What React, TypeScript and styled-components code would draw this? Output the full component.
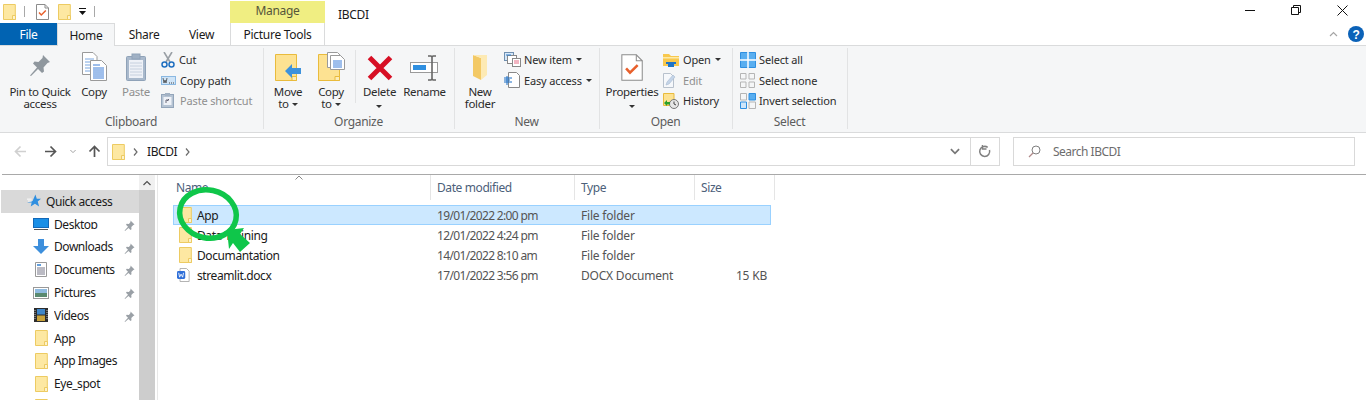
import React from "react";
import styled, { createGlobalStyle } from "styled-components";

const Global = createGlobalStyle`
  html, body { margin: 0; padding: 0; background: #fff; }
  body { font-family: "Noto Sans", "Open Sans", sans-serif; font-size: 12px; color: #1a1a1a; }
`;

const Window = styled.div`
  position: relative;
  width: 1366px;
  height: 400px;
  overflow: hidden;
  background: #fff;
  letter-spacing: -0.3px;
`;

/* ---------- title bar ---------- */
const TitleBar = styled.div`
  display: flex;
  height: 23px;
  align-items: center;
`;
const QuickBar = styled.div`
  display: flex;
  align-items: center;
  width: 230px;
  padding-left: 3px;
  box-sizing: border-box;
  & > svg { flex: none; }
`;
const QuickSep = styled.span<{ $l: number; $r: number }>`
  width: 1px;
  height: 11px;
  background: #a8a8a8;
  margin-left: ${(p) => p.$l}px;
  margin-right: ${(p) => p.$r}px;
`;
const Manage = styled.div`
  width: 95px;
  height: 22px;
  margin-top: 1px;
  background: #f0ee82;
  color: #55553a;
  display: flex;
  align-items: center;
  justify-content: center;
  padding-bottom: 4px;
  box-sizing: border-box;
`;
const WindowTitle = styled.div`
  margin-left: 13px;
  flex: 1;
  padding-top: 5px;
`;
const WinButtons = styled.div`
  display: flex;
  align-items: center;
  height: 20px;
  padding-right: 1px;
  padding-bottom: 3px;
`;
const WinBtn = styled.div`
  width: 46px;
  display: flex;
  justify-content: center;
`;

/* ---------- tabs ---------- */
const TabBar = styled.div`
  display: flex;
  height: 23px;
  box-sizing: border-box;
  border-bottom: 1px solid #dadbdc;
  align-items: stretch;
`;
const FileTab = styled.div`
  width: 57px;
  height: 22px;
  background: #0163b2;
  color: #fff;
  display: flex;
  align-items: center;
  justify-content: center;
`;
const Tab = styled.div<{ $w: number; $active?: boolean; $framed?: boolean }>`
  width: ${(p) => p.$w}px;
  height: ${(p) => (p.$active ? 23 : 22)}px;
  box-sizing: border-box;
  display: flex;
  align-items: center;
  justify-content: center;
  background: ${(p) => (p.$active ? "#f5f6f7" : "transparent")};
  border-left: ${(p) => (p.$active || p.$framed ? "1px solid #dadbdc" : "none")};
  border-right: ${(p) => (p.$active || p.$framed ? "1px solid #dadbdc" : "none")};
  border-top: ${(p) => (p.$active ? "1px solid #dadbdc" : "none")};
`;
const TabSpacer = styled.div`
  flex: 1;
  display: flex;
  justify-content: flex-end;
  align-items: center;
  gap: 10px;
  padding-right: 2px;
`;

/* ---------- ribbon ---------- */
const Ribbon = styled.div`
  display: flex;
  height: 87px;
  box-sizing: border-box;
  background: #f5f6f7;
  border-bottom: 1px solid #dadbdc;
`;
const Group = styled.div<{ $w: number }>`
  width: ${(p) => p.$w}px;
  flex: none;
  display: flex;
  flex-direction: column;
  position: relative;
  &::after {
    content: "";
    position: absolute;
    right: 0;
    top: 2px;
    bottom: 3px;
    width: 1px;
    background: #e2e3e4;
  }
`;
const GroupBody = styled.div<{ $pl: number }>`
  height: 67px;
  box-sizing: border-box;
  flex: none;
  display: flex;
  align-items: flex-start;
  padding-left: ${(p) => p.$pl}px;
  padding-top: 3px;
`;
const GroupLabel = styled.div`
  height: 19px;
  text-align: center;
  color: #5c5c5c;
  line-height: 18px;
  padding-right: 2px;
`;
const Large = styled.div<{ $w: number; $dim?: boolean }>`
  width: ${(p) => p.$w}px;
  flex: none;
  display: flex;
  flex-direction: column;
  align-items: center;
  color: ${(p) => (p.$dim ? "#8f8f8f" : "#2b2b2b")};
`;
const LargeIcon = styled.div<{ $pb?: number }>`
  height: 32px;
  box-sizing: border-box;
  padding-bottom: ${(p) => p.$pb ?? 0}px;
  display: flex;
  align-items: flex-end;
  justify-content: center;
  margin-bottom: 5px;
`;
const LargeText = styled.div`
  text-align: center;
  line-height: 12px;
  font-size: 11.5px;
  white-space: nowrap;
`;
const Caret = styled.i`
  display: inline-block;
  width: 0;
  height: 0;
  border-left: 3px solid transparent;
  border-right: 3px solid transparent;
  border-top: 3px solid #333;
  margin-left: 3px;
  vertical-align: 2px;
`;
const LoneCaret = styled(Caret)`
  margin-left: 0;
  vertical-align: 0;
`;
const VSep = styled.span`
  flex: none;
  width: 1px;
  height: 53px;
  margin: 1px 0 0 0;
  background: #e2e3e4;
`;
const SmallCol = styled.div<{ $ml: number }>`
  display: flex;
  flex-direction: column;
  margin-left: ${(p) => p.$ml}px;
  margin-top: 0.5px;
`;
const SmallRow = styled.div<{ $dim?: boolean; $tw: number }>`
  display: flex;
  align-items: center;
  height: 20.5px;
  font-size: 11px;
  letter-spacing: -0.15px;
  white-space: nowrap;
  color: ${(p) => (p.$dim ? "#8f8f8f" : "#2b2b2b")};
  & > svg {
    flex: none;
    margin-right: ${(p) => p.$tw}px;
  }
  & > i {
    margin-left: 4px;
    vertical-align: 0;
  }
`;

/* ---------- address bar ---------- */
const AddressRow = styled.div`
  height: 42px;
  display: flex;
  align-items: flex-start;
  padding-top: 4px;
  box-sizing: border-box;
  border-bottom: 1px solid #a9a9a9;
  margin-left: 2px;
`;
const NavIcons = styled.div`
  width: 105px;
  height: 29px;
  flex: none;
  display: flex;
  align-items: center;
  padding-left: 12px;
  box-sizing: border-box;
`;
const NavGap = styled.span<{ $w: number }>`
  width: ${(p) => p.$w}px;
  flex: none;
`;
const AddressBox = styled.div`
  width: 893px;
  height: 29px;
  box-sizing: border-box;
  flex: none;
  border: 1px solid #d9d9d9;
  display: flex;
  align-items: center;
  padding-left: 4px;
  letter-spacing: -0.4px;
`;
const Crumb = styled.span`
  margin: 0 9px 0 8px;
  line-height: 0;
`;
const AddressEnd = styled.div`
  margin-left: auto;
  display: flex;
  align-items: center;
  height: 100%;
`;
const Refresh = styled.div`
  width: 28px;
  height: 100%;
  border-left: 1px solid #d9d9d9;
  margin-left: 10px;
  display: flex;
  align-items: center;
  justify-content: center;
`;
const SearchBox = styled.div`
  width: 342px;
  height: 29px;
  margin-left: 13px;
  flex: none;
  box-sizing: border-box;
  border: 1px solid #d9d9d9;
  display: flex;
  align-items: center;
  padding-left: 14px;
  color: #6d6d6d;
  gap: 12px;
  letter-spacing: -0.5px;
`;

/* ---------- body ---------- */
const Body = styled.div`
  display: flex;
  height: 225px;
`;
const Sidebar = styled.div`
  width: 139px;
  flex: none;
  padding-top: 15px;
  box-sizing: border-box;
  overflow: hidden;
  letter-spacing: -0.45px;
`;
const NavRow = styled.div<{ $active?: boolean; $ml: number }>`
  height: 22.8px;
  margin-left: 1px;
  display: flex;
  align-items: center;
  position: relative;
  background: ${(p) => (p.$active ? "#d9d9d9" : "transparent")};
  padding-left: ${(p) => p.$ml}px;
`;
const NavSlot = styled.span<{ $w: number }>`
  width: ${(p) => p.$w}px;
  flex: none;
  display: flex;
  justify-content: center;
  margin-right: 5px;
`;
const NavText = styled.span<{ $clip?: boolean }>`
  color: #1a1a1a;
  white-space: nowrap;
  ${(p) => (p.$clip ? "height: 13px; line-height: 17px; overflow: hidden; margin-top: -3px;" : "")}
`;
const PinSlot = styled.span`
  position: absolute;
  left: 123px;
  top: 6px;
`;
const Scrollbar = styled.div`
  width: 16px;
  flex: none;
  background: #cdcdcd;
  display: flex;
  flex-direction: column;
`;
const ScrollUp = styled.div`
  height: 15px;
  background: #f0f0f0;
  display: flex;
  align-items: center;
  justify-content: center;
`;
const ListPane = styled.div`
  flex: 1;
  margin-left: 2px;
  border-left: 1px solid #e8e8e8;
  position: relative;
  padding-left: 12px;
`;
const SortMark = styled.span`
  position: absolute;
  left: 137px;
  top: 0;
  line-height: 0;
`;
const HeaderRow = styled.div`
  display: grid;
  grid-template-columns: 261px 144px 120px 80px;
  height: 25px;
  margin-bottom: 5px;
  letter-spacing: -0.4px;
`;
const HeadCell = styled.div`
  color: #4c607a;
  padding-left: 6px;
  border-right: 1px solid #e5e5e5;
  display: flex;
  align-items: center;
  height: 25px;
  box-sizing: border-box;
`;
const FileRow = styled.div<{ $sel?: boolean }>`
  display: grid;
  grid-template-columns: 258px 144px 120px 72px;
  height: 20px;
  width: 598px;
  margin-left: 3px;
  box-sizing: border-box;
  align-items: center;
  background: ${(p) => (p.$sel ? "#cce8ff" : "transparent")};
  outline: ${(p) => (p.$sel ? "1px solid #99d1ff" : "none")};
  outline-offset: -1px;
`;
const NameCell = styled.div`
  display: flex;
  align-items: center;
  padding-left: 6px;
  letter-spacing: -0.4px;
`;
const NameSlot = styled.span<{ $shift?: number }>`
  width: 13px;
  flex: none;
  margin-right: 5px;
  display: flex;
  margin-left: ${(p) => p.$shift ?? 0}px;
  padding-right: ${(p) => -(p.$shift ?? 0)}px;
`;
const MetaCell = styled.div<{ $right?: boolean; $tight?: boolean }>`
  color: #545454;
  padding-left: ${(p) => (p.$right ? 0 : 6)}px;
  text-align: ${(p) => (p.$right ? "right" : "left")};
  white-space: nowrap;
  letter-spacing: ${(p) => (p.$tight ? "-0.65px" : "-0.2px")};
`;
const Annotation = styled.svg`
  position: absolute;
  left: 0;
  top: 0;
  pointer-events: none;
`;

/* ---------- icons ---------- */
const Folder = () => (
  <svg width={13} height={16} viewBox="0 0 13 16">
    <path d="M.5.5h11.800v15H.5z" fill="#fde8a2" stroke="#edcb62" />
    <path d="M9.500 15.500v-4h3v4z" fill="#fdf2cc" stroke="#edcb62" />
  </svg>
);
const PropsIcon = ({ s = 1 }: { s?: number }) => (
  <svg width={13 * s} height={16 * s} viewBox="0 0 13 16">
    <path d="M.5.5h8.500l3.500 3.500v11.500H.5z" fill="#fff" stroke="#8c8c8c" strokeWidth={s > 1 ? 0.6 : 1} />
    <path d="M9 .5V4h3.500" fill="none" stroke="#8c8c8c" strokeWidth={s > 1 ? 0.6 : 1} />
    <path d="M3 8.500l2.300 2.500 4.500-4.500" fill="none" stroke="#e8602c" strokeWidth="1.500" />
  </svg>
);
const Pin = () => (
  <svg width="11" height="12" viewBox="0 0 11 12">
    <path d="M6.500.5l4 4-1.200.6-2 2 .2 2.200-1 .7-2-2L1 11l-.4-.4L4 6.800l-2-2 .7-1 2.200.2 1.600-2z" fill="#9aa0a6" />
  </svg>
);
const BigPin = () => (
  <svg width="22" height="24" viewBox="0 0 22 24">
    <path d="M14 1l7 7-2.500 1-4 4.500.5 4-2 1.500-4-4-7 7-1-.5 7-8-4-4 1.500-2 4 .5 4-4z" fill="#8f979e" />
  </svg>
);
const CopyIcon = () => (
  <svg width="25" height="29" viewBox="0 0 25 29">
    <path d="M.5.5H11l4 4v18H.5z" fill="#fff" stroke="#9a9a9a" />
    <path d="M3 7h9M3 10h9M3 13h9M3 16h9M3 19h9" stroke="#7aa7e0" />
    <path d="M8.500 8.500h11l5 5v15h-16z" fill="#fff" stroke="#9a9a9a" />
    <path d="M11 13h7M11 16h11M11 18h11M11 20h11M11 22h11M11 24h11M11 26h11" stroke="#3f7fd8" />
  </svg>
);
const PasteIcon = () => (
  <svg width="20" height="28" viewBox="0 0 20 28">
    <rect x=".5" y="3.500" width="19" height="24" rx="1" fill="#a9b9cc" stroke="#8fa2b8" />
    <rect x="3" y="7" width="14" height="18" fill="#eef1f7" />
    <path d="M4 10h12M4 13h12M4 16h12M4 19h12M4 22h12" stroke="#c6d0de" />
    <rect x="6" y="1" width="8" height="5" fill="#9fb0c4" stroke="#8fa2b8" />
  </svg>
);
const Scissors = () => (
  <svg width="14" height="16" viewBox="0 0 14 16">
    <path d="M3 0l6 10M11 0L5 10" stroke="#9aa0a6" strokeWidth="1.600" fill="none" />
    <circle cx="3.500" cy="12.500" r="2.500" fill="none" stroke="#1f6fc0" strokeWidth="1.500" />
    <circle cx="10.500" cy="12.500" r="2.500" fill="none" stroke="#1f6fc0" strokeWidth="1.500" />
  </svg>
);
const CopyPathIcon = () => (
  <svg width="15" height="9" viewBox="0 0 15 9">
    <rect x=".5" y=".5" width="14" height="8" fill="#cfe4f7" stroke="#8ab8e2" />
    <path d="M2 2l1 5 1-3 1 3 1-5" fill="none" stroke="#444" strokeWidth=".8" />
    <path d="M8 7h1M10 7h1M12 7h1" stroke="#444" />
  </svg>
);
const PasteShortcutIcon = () => (
  <svg width="13" height="15" viewBox="0 0 13 15">
    <rect x=".5" y="1.500" width="12" height="13" fill="#b5c3d3" stroke="#93a5ba" />
    <rect x="2.500" y="4" width="8" height="8" fill="#eef1f7" />
    <path d="M5 10V7h3M6 8l2-2" stroke="#667" fill="none" />
    <rect x="4" y="0" width="5" height="3" fill="#a3b2c4" />
  </svg>
);
const MoveIcon = () => (
  <svg width="27" height="27" viewBox="0 0 27 27">
    <path d="M.5.5h21v26H.5z" fill="#fde292" stroke="#e9bb3c" />
    <path d="M17 22.500h4.500v4H17z" fill="#fdedb8" stroke="#e9bb3c" />
    <path d="M10 17l7-7v4h9v6h-9v4z" fill="#3d92dc" />
  </svg>
);
const CopyToIcon = () => (
  <svg width="27" height="29" viewBox="0 0 27 29">
    <path d="M.5 2.500h21v26H.5z" fill="#fde292" stroke="#e9bb3c" />
    <path d="M17 24.500h4.500v4H17z" fill="#fdedb8" stroke="#e9bb3c" />
    <path d="M9.500.5h10l3 3v12h-13z" fill="#fff" stroke="#9a9a9a" />
    <path d="M12.500 3.500h10l4 4v10h-14z" fill="#fff" stroke="#9a9a9a" />
    <path d="M15 9h9M15 11h9M15 13h9M15 15h9" stroke="#3f7fd8" />
  </svg>
);
const DeleteIcon = () => (
  <svg width="26" height="26" viewBox="0 0 26 26">
    <path d="M2.500 2.500l21 21M23.500 2.500l-21 21" stroke="#d70f24" strokeWidth="5" fill="none" />
  </svg>
);
const RenameIcon = () => (
  <svg width="29" height="26" viewBox="0 0 29 26">
    <rect x=".5" y="7.500" width="27" height="10" fill="#fff" stroke="#9a9a9a" />
    <rect x="3" y="10" width="13" height="5" fill="#2f8fe0" />
    <path d="M18 1h3l1 1 1-1h3M18 25h3l1-1 1 1h3M22 2v22" stroke="#666" strokeWidth="1.600" fill="none" />
  </svg>
);
const NewFolderIcon = () => (
  <svg width="18" height="27" viewBox="0 0 18 27">
    <path d="M2 1l8 3v22l-8-4z" fill="#f3c965" />
    <path d="M10 4v22l6-5V1H2z" fill="#fdeab4" />
  </svg>
);
const NewItemIcon = () => (
  <svg width="17" height="15" viewBox="0 0 17 15">
    <rect x=".5" y=".5" width="9" height="8" fill="#d7e8f8" stroke="#6f8fb0" />
    <rect x="3.500" y="3.500" width="9" height="8" fill="#fff" stroke="#888" />
    <rect x="8.500" y="6.500" width="8" height="8" fill="#fff" stroke="#888" />
    <path d="M10 9h5M10 11h5" stroke="#d46" strokeWidth=".8" />
    <path d="M2 3h5" stroke="#2f7fd0" />
  </svg>
);
const EasyIcon = () => (
  <svg width="16" height="16" viewBox="0 0 16 16">
    <path d="M4.500.5h8l3 3v12h-11z" fill="#fff" stroke="#888" />
    <path d="M0 6h8M0 8h6M0 10h8" stroke="#1d6fc4" />
    <path d="M3 4v9" stroke="#1d6fc4" />
  </svg>
);
const OpenFolder = () => (
  <svg width="16" height="14" viewBox="0 0 16 14">
    <path d="M0 1h6l2 2h8v10H0z" fill="#f8c84e" />
    <path d="M0 4h16v1.500H0z" fill="#fdeaa8" />
    <path d="M5 9h6v5H5z" fill="#1e74c8" />
    <path d="M3 9h10v2H3z" fill="#1e74c8" />
  </svg>
);
const EditIcon = () => (
  <svg width="13" height="15" viewBox="0 0 13 15">
    <path d="M.5.500h7l3 3v11H.5z" fill="#f6f8fb" stroke="#b8c1cc" />
    <path d="M3 12l1-3 6-7 2 2-6 7z" fill="#c4d4e8" stroke="#aabbd0" strokeWidth=".6" />
  </svg>
);
const HistoryIcon = () => (
  <svg width="16" height="16" viewBox="0 0 16 16">
    <path d="M.5.5h10.500v12H.500z" fill="#fde292" stroke="#e9bb3c" />
    <circle cx="11" cy="11" r="4.500" fill="#e6e6e6" stroke="#777" />
    <path d="M11 8.500V11l2 1" stroke="#444" fill="none" />
    <path d="M1 10l3-3v2h3v2.500H4V13z" fill="#2aa02a" />
  </svg>
);
const SelectAll = () => (
  <svg width="16" height="16" viewBox="0 0 16 16">
    <path d="M.5.5h15v15H.5z" fill="#59aef0" stroke="#2f8fe0" />
    <path d="M8 0v16M0 8h16" stroke="#fff" strokeWidth="1.500" />
  </svg>
);
const SelectNone = () => (
  <svg width="15" height="15" viewBox="0 0 15 15">
    <path d="M.5.5h5.500v5.500H.500zM9 .5h5.500v5.500H9zM.5 9h5.500v5.500H.500zM9 9h5.500v5.500H9z" fill="none" stroke="#b5b5b5" />
  </svg>
);
const SelectInvert = () => (
  <svg width="16" height="16" viewBox="0 0 16 16">
    <path d="M.5 9h6v6.500h-6z" fill="#cfe6fa" stroke="#2f8fe0" />
    <path d="M9 .5h6.500V7H9z" fill="#59aef0" stroke="#2f8fe0" />
    <path d="M.5.5h6V7h-6zM9 9h6.500v6.500H9z" fill="none" stroke="#b5b5b5" />
  </svg>
);
const Word = () => (
  <svg width="15" height="16" viewBox="0 0 15 16">
    <path d="M3.500.5h7.500l3 3v12H3.500z" fill="#fff" stroke="#a8a8a8" />
    <rect x="0" y="3.500" width="9.500" height="9" rx="1.500" fill="#2f6fd8" />
    <path d="M2 5.500l1 5 1.700-3.500L6.500 10.500l1-5" fill="none" stroke="#fff" />
  </svg>
);
const Star = () => (
  <svg width="14" height="14" viewBox="0 0 15 14">
    <path d="M9 0l1.500 4.500H15l-3.500 3L13 13 8.500 10 4 13l1-4.500H0l6-1.500z" fill="#2f8fe0" />
    <path d="M0 5h5M1 7h4" stroke="#fff" />
  </svg>
);
const Desktop = () => (
  <svg width="16" height="12" viewBox="0 0 16 12">
    <rect x="0" y="0" width="16" height="10" fill="#1a8fe6" />
    <rect x=".5" y=".5" width="15" height="9" fill="none" stroke="#1268b8" />
    <path d="M1 11.500h14" stroke="#555" />
  </svg>
);
const Downloads = () => (
  <svg width="16" height="15" viewBox="0 0 16 15">
    <path d="M5 0h6v7h5l-8 8-8-8h5z" fill="#3d8fdc" />
  </svg>
);
const Documents = () => (
  <svg width="12" height="15" viewBox="0 0 12 15">
    <path d="M.5.500h11v14H.500z" fill="#fff" stroke="#999" />
    <path d="M2 3h4" stroke="#2f7fd0" strokeWidth="1.500" />
    <path d="M2 6h8M2 8h8M2 10h8M2 12h8" stroke="#778" />
  </svg>
);
const Pictures = () => (
  <svg width="16" height="12" viewBox="0 0 16 12">
    <rect x=".5" y=".5" width="15" height="11" fill="#fff" stroke="#999" />
    <rect x="2" y="2" width="12" height="4" fill="#8fbbe0" />
    <rect x="2" y="6" width="12" height="4" fill="#5a8a70" />
  </svg>
);
const Videos = () => (
  <svg width="14" height="14" viewBox="0 0 14 14">
    <rect width="14" height="14" fill="#2c2c2c" />
    <rect x="3" y="1" width="8" height="5.500" fill="#3f86c8" />
    <rect x="3" y="7.500" width="8" height="5.500" fill="#c8a23a" />
    <path d="M1 2v10M13 2v10" stroke="#bbb" strokeDasharray="1 1" />
  </svg>
);
const Chevron = ({ d, c = "#6b6b6b", w = 8, h = 6, sw = 1.2 }: { d: string; c?: string; w?: number; h?: number; sw?: number }) => (
  <svg width={w} height={h} viewBox="0 0 8 6">
    <path d={d} fill="none" stroke={c} strokeWidth={sw} />
  </svg>
);
const DOWN = "M.5 1l3.500 3.500L7.500 1";
const UP = "M.5 5l3.500-3.500L7.500 5";
const Arrow = ({ dir, c }: { dir: "l" | "r" | "u"; c: string }) => (
  <svg width="13" height="13" viewBox="0 0 13 13">
    <path
      d={dir === "l" ? "M12 6.500H1.500M6.500 1.500l-5 5 5 5" : dir === "r" ? "M1 6.500h10.500M6.500 1.500l5 5-5 5" : "M6.500 12V1.500M1.500 6.500l5-5 5 5"}
      fill="none"
      stroke={c}
      strokeWidth="1.700"
    />
  </svg>
);
const CrumbArrow = () => (
  <svg width="5" height="8" viewBox="0 0 5 8">
    <path d="M1 .5l3 3.500-3 3.500" fill="none" stroke="#6b6b6b" strokeWidth="1.200" />
  </svg>
);

const navItems: { icon: React.ReactNode; label: string; pin?: boolean; clip?: boolean }[] = [
  { icon: <Desktop />, label: "Desktop", pin: true, clip: true },
  { icon: <Downloads />, label: "Downloads", pin: true },
  { icon: <Documents />, label: "Documents", pin: true },
  { icon: <Pictures />, label: "Pictures", pin: true },
  { icon: <Videos />, label: "Videos", pin: true, clip: true },
  { icon: <Folder />, label: "App" },
  { icon: <Folder />, label: "App Images" },
  { icon: <Folder />, label: "Eye_spot" },
];

const files: { icon: React.ReactNode; shift?: number; name: string; date: string; type: string; size: string; sel?: boolean }[] = [
  { icon: <Folder />, name: "App", date: "19/01/2022 2:00 pm", type: "File folder", size: "", sel: true },
  { icon: <Folder />, name: "Data Training", date: "12/01/2022 4:24 pm", type: "File folder", size: "" },
  { icon: <Folder />, name: "Documantation", date: "14/01/2022 8:10 am", type: "File folder", size: "" },
  { icon: <Word />, shift: -2, name: "streamlit.docx", date: "17/01/2022 3:56 pm", type: "DOCX Document", size: "15 KB" },
];

export default function App() {
  return (
    <Window>
      <Global />
      <TitleBar>
        <QuickBar>
          <Folder />
          <QuickSep $l={8} $r={11} />
          <PropsIcon />
          <NavGap $w={9} />
          <Folder />
          <NavGap $w={8} />
          <svg width="7" height="8" viewBox="0 0 7 8">
            <path d="M0 0h7v1H0zM0 3h7L3.500 7z" fill="#111" />
          </svg>
          <QuickSep $l={8} $r={0} />
        </QuickBar>
        <Manage>Manage</Manage>
        <WindowTitle>IBCDI</WindowTitle>
        <WinButtons>
          <WinBtn>
            <svg width="10" height="10" viewBox="0 0 10 10"><path d="M0 5.500h10" stroke="#111" /></svg>
          </WinBtn>
          <WinBtn>
            <svg width="10" height="10" viewBox="0 0 10 10"><path d="M.5 2.500h7v7h-7zM2.500 2.500v-2h7v7h-2" fill="none" stroke="#111" /></svg>
          </WinBtn>
          <WinBtn>
            <svg width="11" height="11" viewBox="0 0 11 11"><path d="M.5.500l10 10M10.500.500l-10 10" stroke="#111" fill="none" /></svg>
          </WinBtn>
        </WinButtons>
      </TitleBar>
      <TabBar>
        <FileTab>File</FileTab>
        <Tab $w={58} $active>Home</Tab>
        <Tab $w={58}>Share</Tab>
        <Tab $w={57}>View</Tab>
        <Tab $w={95} $framed>Picture Tools</Tab>
        <TabSpacer>
          <Chevron d={UP} c="#a5a5a5" w={9} h={6} />
          <svg width="16" height="16" viewBox="0 0 16 16">
            <circle cx="8" cy="8" r="8" fill="#0b62b8" />
            <text x="8" y="12.500" textAnchor="middle" fontSize="12" fontWeight="700" fill="#fff" fontFamily="Liberation Sans">?</text>
          </svg>
        </TabSpacer>
      </TabBar>
      <Ribbon>
        <Group $w={264}>
          <GroupBody $pl={5}>
            <Large $w={70}><LargeIcon $pb={3}><BigPin /></LargeIcon><LargeText>Pin to Quick<br />access</LargeText></Large>
            <Large $w={38}><LargeIcon><CopyIcon /></LargeIcon><LargeText>Copy</LargeText></Large>
            <Large $w={46} $dim><LargeIcon><PasteIcon /></LargeIcon><LargeText>Paste</LargeText></Large>
            <SmallCol $ml={2}>
              <SmallRow $tw={4}><Scissors />Cut</SmallRow>
              <SmallRow $tw={4}><CopyPathIcon />Copy path</SmallRow>
              <SmallRow $tw={6} $dim><PasteShortcutIcon />Paste shortcut</SmallRow>
            </SmallCol>
          </GroupBody>
          <GroupLabel>Clipboard</GroupLabel>
        </Group>
        <Group $w={191}>
          <GroupBody $pl={2}>
            <Large $w={44}><LargeIcon><MoveIcon /></LargeIcon><LargeText>Move<br />to<Caret /></LargeText></Large>
            <Large $w={42}><LargeIcon><CopyToIcon /></LargeIcon><LargeText>Copy<br />to<Caret /></LargeText></Large>
            <NavGap $w={3} />
            <VSep />
            <Large $w={47}><LargeIcon><DeleteIcon /></LargeIcon><LargeText>Delete<br /><LoneCaret /></LargeText></Large>
            <Large $w={43}><LargeIcon><RenameIcon /></LargeIcon><LargeText>Rename</LargeText></Large>
          </GroupBody>
          <GroupLabel>Organize</GroupLabel>
        </Group>
        <Group $w={145}>
          <GroupBody $pl={2}>
            <Large $w={46}><LargeIcon><NewFolderIcon /></LargeIcon><LargeText>New<br />folder</LargeText></Large>
            <SmallCol $ml={1}>
              <SmallRow $tw={3}><NewItemIcon />New item<Caret /></SmallRow>
              <SmallRow $tw={4}><EasyIcon />Easy access<Caret /></SmallRow>
            </SmallCol>
          </GroupBody>
          <GroupLabel>New</GroupLabel>
        </Group>
        <Group $w={133}>
          <GroupBody $pl={4}>
            <Large $w={56}><LargeIcon><PropsIcon s={1.700} /></LargeIcon><LargeText>Properties<br /><LoneCaret /></LargeText></Large>
            <SmallCol $ml={3}>
              <SmallRow $tw={4}><OpenFolder />Open<Caret /></SmallRow>
              <SmallRow $tw={7} $dim><EditIcon />Edit</SmallRow>
              <SmallRow $tw={4}><HistoryIcon />History</SmallRow>
            </SmallCol>
          </GroupBody>
          <GroupLabel>Open</GroupLabel>
        </Group>
        <Group $w={115}>
          <GroupBody $pl={7}>
            <SmallCol $ml={0}>
              <SmallRow $tw={3}><SelectAll />Select all</SmallRow>
              <SmallRow $tw={4}><SelectNone />Select none</SmallRow>
              <SmallRow $tw={3}><SelectInvert />Invert selection</SmallRow>
            </SmallCol>
          </GroupBody>
          <GroupLabel>Select</GroupLabel>
        </Group>
      </Ribbon>
      <AddressRow>
        <NavIcons>
          <Arrow dir="l" c="#d0d0d0" />
          <NavGap $w={17} />
          <Arrow dir="r" c="#555" />
          <NavGap $w={13} />
          <Chevron d={DOWN} c="#999" w={6} h={5} />
          <NavGap $w={12} />
          <Arrow dir="u" c="#555" />
        </NavIcons>
        <AddressBox>
          <Folder />
          <Crumb><CrumbArrow /></Crumb>
          IBCDI
          <Crumb><CrumbArrow /></Crumb>
          <AddressEnd>
            <Chevron d={DOWN} c="#777" w={10} h={7} sw={1.5} />
            <Refresh>
              <svg width="14" height="14" viewBox="0 0 14 14">
                <path d="M11.500 5a5 5 0 1 1-1.800-2.600" fill="none" stroke="#808080" strokeWidth="1.500" />
                <path d="M5.500 0v4h4" fill="none" stroke="#808080" strokeWidth="1.500" transform="translate(-1 0)" />
              </svg>
            </Refresh>
          </AddressEnd>
        </AddressBox>
        <SearchBox>
          <svg width="13" height="13" viewBox="0 0 13 13">
            <circle cx="8" cy="5" r="4" fill="none" stroke="#7f7f7f" />
            <path d="M5 8l-4 4" stroke="#b08a8a" strokeWidth="1.200" />
          </svg>
          Search IBCDI
        </SearchBox>
      </AddressRow>
      <Body>
        <Sidebar>
          <NavRow $active $ml={26}>
            <NavSlot $w={14}><Star /></NavSlot>
            <NavText>Quick access</NavText>
          </NavRow>
          {navItems.map((n) => (
            <NavRow key={n.label} $ml={32}>
              <NavSlot $w={16}>{n.icon}</NavSlot>
              <NavText $clip={n.clip}>{n.label}</NavText>
              {n.pin && <PinSlot><Pin /></PinSlot>}
            </NavRow>
          ))}
          <NavRow $ml={32}><NavSlot $w={16}><Folder /></NavSlot></NavRow>
        </Sidebar>
        <Scrollbar>
          <ScrollUp><Chevron d={UP} c="#505050" w={8} h={6} /></ScrollUp>
        </Scrollbar>
        <ListPane>
          <SortMark>
            <svg width="8" height="5" viewBox="0 0 8 5"><path d="M.5 4.500L4 1l3.500 3.500" fill="none" stroke="#888" /></svg>
          </SortMark>
          <HeaderRow>
            <HeadCell>Name</HeadCell>
            <HeadCell>Date modified</HeadCell>
            <HeadCell>Type</HeadCell>
            <HeadCell>Size</HeadCell>
          </HeaderRow>
          {files.map((f) => (
            <FileRow key={f.name} $sel={f.sel}>
              <NameCell><NameSlot $shift={f.shift}>{f.icon}</NameSlot>{f.name}</NameCell>
              <MetaCell $tight>{f.date}</MetaCell>
              <MetaCell>{f.type}</MetaCell>
              <MetaCell $right>{f.size}</MetaCell>
            </FileRow>
          ))}
        </ListPane>
      </Body>
      <Annotation width="1366" height="400" viewBox="0 0 1366 400">
        <ellipse cx="208" cy="214" rx="28.500" ry="24" fill="none" stroke="#0fc64a" strokeWidth="5.500" transform="rotate(12 208 214)" />
        <path d="M227 230l17-2-4 6 10 9-10 9-7-9-4 6z" fill="#0fc64a" />
      </Annotation>
    </Window>
  );
}
